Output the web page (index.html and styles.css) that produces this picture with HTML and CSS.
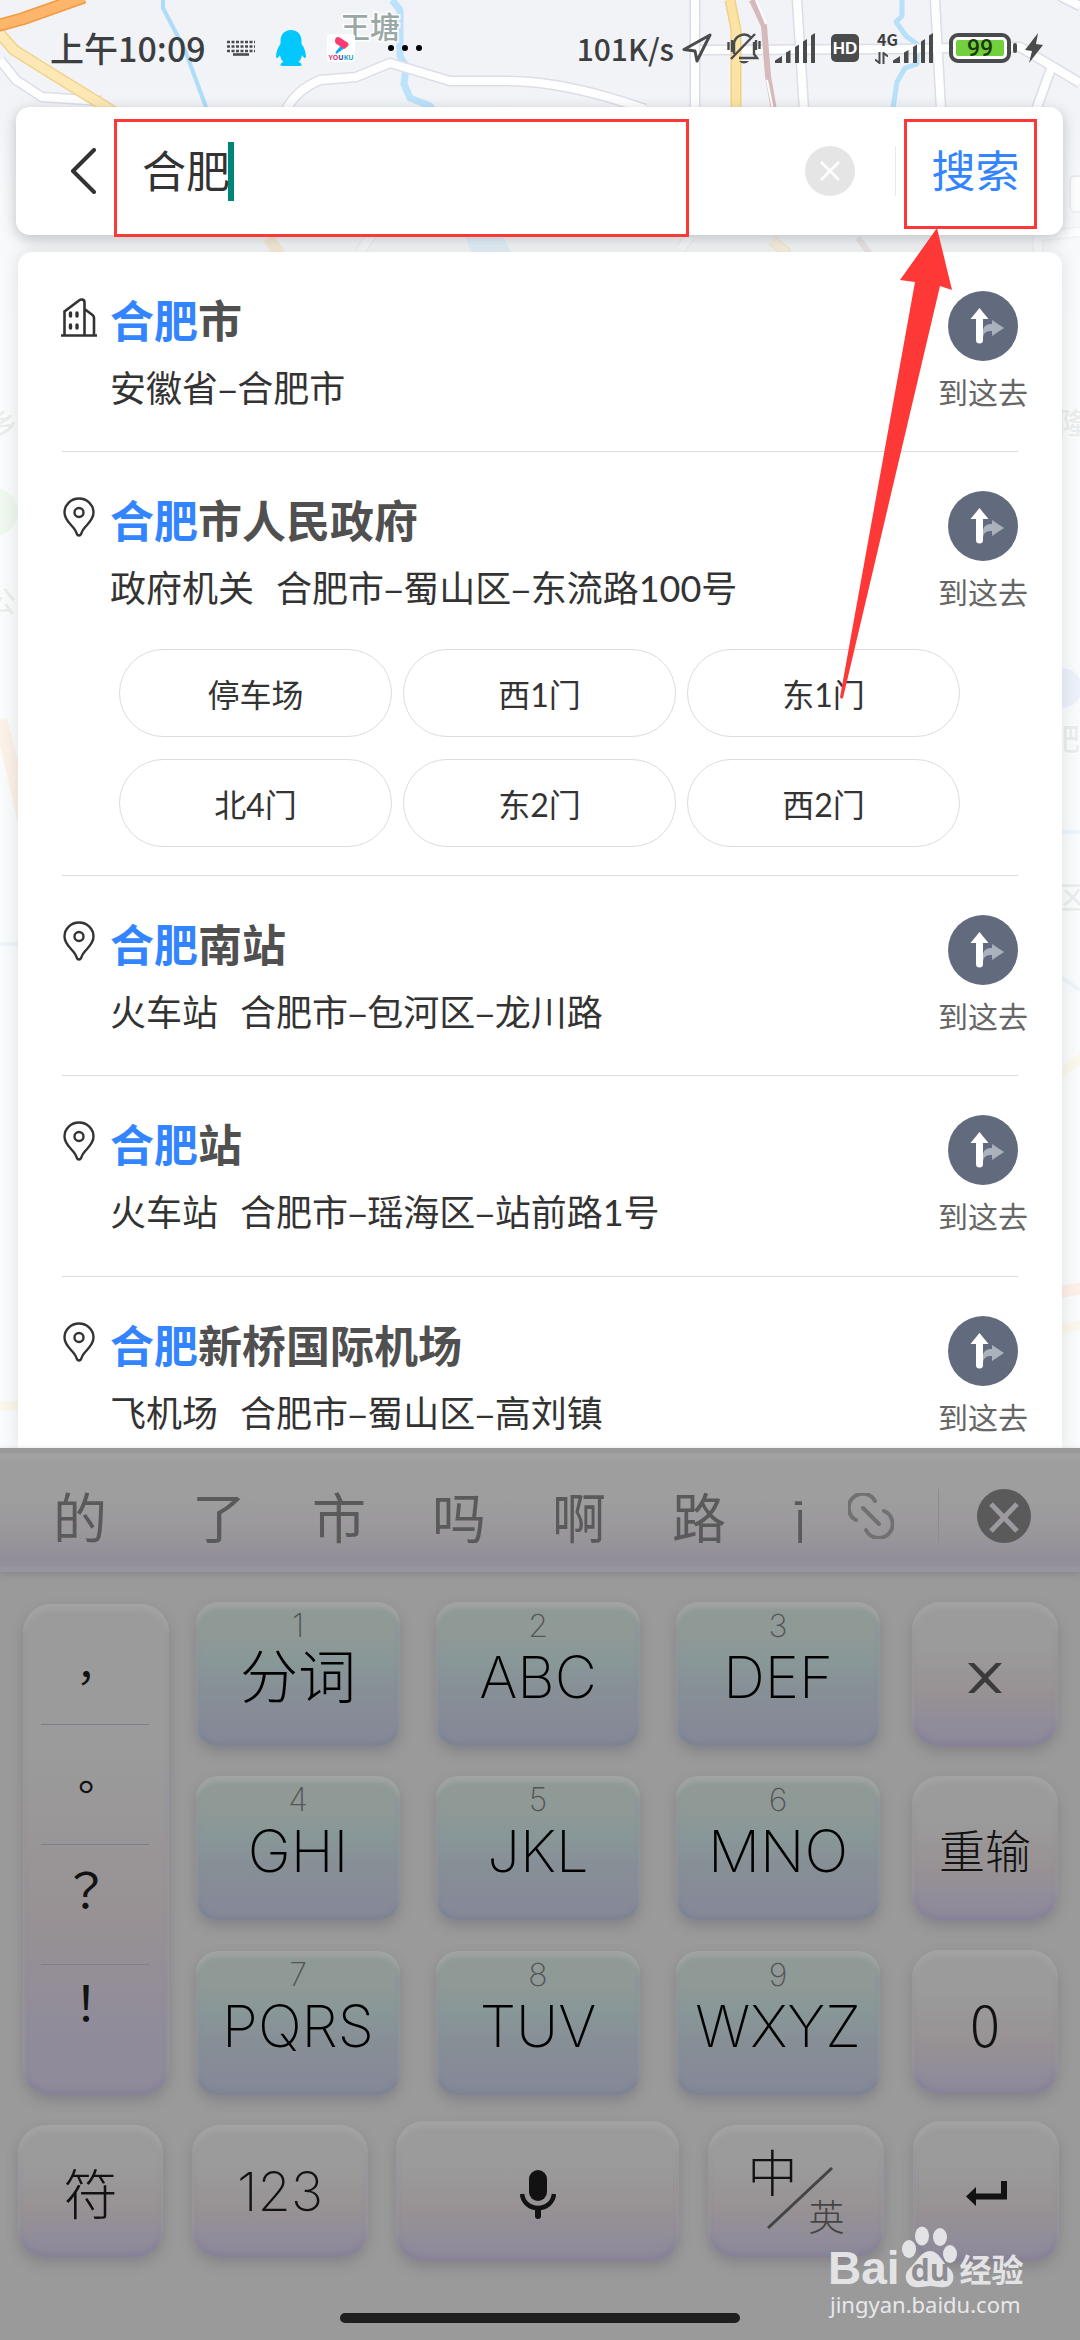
FILE: index.html
```html
<!DOCTYPE html>
<html lang="zh-CN">
<head>
<meta charset="utf-8">
<meta name="viewport" content="width=device-width, initial-scale=1">
<title>合肥 - 搜索</title>
<link rel="stylesheet" href="styles.css">
</head>
<body>
<svg class="symbols" aria-hidden="true">
  <symbol id="pin" viewBox="0 0 36 40">
    <path d="M18 38.500c-1.600 0-2.200-1.200-2.700-3C13.500 29 3.500 25 3.500 15.500a14.500 14 0 0 1 29 0C32.500 25 22.500 29 20.700 35.500c-.5 1.800-1.100 3-2.700 3z" fill="none" stroke="#333" stroke-width="2.400"/>
    <circle cx="18" cy="15.500" r="4.500" fill="none" stroke="#333" stroke-width="2.400"/>
  </symbol>
  <symbol id="building" viewBox="0 0 36 40">
    <path d="M3.500 38V14.500L18 3.500c2-1.500 5.500-1.500 5.500 2V38M23.500 12l8 6c1 .8 1.500 1.500 1.500 3v17M0 38.500h36" fill="none" stroke="#333" stroke-width="2.600"/>
    <path d="M9.500 16v3M16 16v3M9.500 28v3M16 28v3" stroke="#333" stroke-width="3.400" stroke-linecap="round"/>
  </symbol>
  <symbol id="go" viewBox="0 0 70 70">
    <circle cx="35" cy="35" r="35" fill="#616b7d"/>
    <path d="M35 45V39c1-5 5-6 9-6v-4l12 8-12 8v-5c-5 0-8 1-9 6z" fill="#acb2bd"/>
    <path d="M31.500 17l9 11H35v21a3.500 3.500 0 0 1-7 0V28h-5.500z" fill="#fff"/>
  </symbol>
  <symbol id="signal" viewBox="0 0 40 30">
    <path d="M0 30V27.500L7 23v7zM11 30V19.500L15.500 17v13zM20 30V14l4-2.500V30zM28 30V8.500L32 6v24zM36 30V2.500L40 0v30z" fill="#4a4b4d"/>
  </symbol>
</svg>

<svg class="map" viewBox="0 0 1080 2340" preserveAspectRatio="xMidYMin slice" aria-hidden="true">
  <g fill="none" stroke-linejoin="round">
    <path d="M163 0v8l22 42 22 60" stroke="#a6dafa" stroke-width="4"/>
    <path d="M392 0l8 10v46l6 10-2 18 6 14 20 8 4 6" stroke="#b6e0fb" stroke-width="7"/>
    <path d="M902 0v16l-6 6 10 14 11 8v20l-12 4-8 14-4 26" stroke="#b0def9" stroke-width="5"/>
    <g stroke="#d9dbe6" stroke-width="11">
      <path d="M0 60l16 20 26 17 60 4M286 110q10-20 34-30l36-3 34-14 60 18h50q60-2 145 28M695 0v110M797 0l7 110M935 0l6 110M700 50l200-1 120-2 60 36M1052 66l-16 44M1060-4l20 10M680 250l10-14M360 252l20-30M1038 252v-16l42-4"/>
    </g>
    <g stroke="#fff" stroke-width="8">
      <path d="M0 60l16 20 26 17 60 4M286 110q10-20 34-30l36-3 34-14 60 18h50q60-2 145 28M695 0v110M797 0l7 110M935 0l6 110M700 50l200-1 120-2 60 36M1052 66l-16 44M1060-4l20 10M680 250l10-14M360 252l20-30M1038 252v-16l42-4"/>
    </g>
    <path d="M0 34l14 16 40 25 60 37" stroke="#f0cf83" stroke-width="12"/>
    <path d="M0 34l14 16 40 25 60 37" stroke="#fee7ad" stroke-width="9"/>
    <path d="M-4 26l26-7 62-22" stroke="#f0922c" stroke-width="13"/>
    <path d="M-4 26l26-7 62-22" stroke="#ffae5c" stroke-width="10"/>
    <path d="M730 0l6 30v80M772 240l16 14" stroke="#f0cd78" stroke-width="11"/>
    <path d="M730 0l6 30v80M772 240l16 14" stroke="#fee19a" stroke-width="8"/>
    <path d="M752 0l12 26 4 50 6 34M858 238l12 16" stroke="#d3b3b3" stroke-width="6"/>
    <path d="M756 0l10 24M767 80l6 30" stroke="#fff" stroke-width="2"/>
    <path d="M268 238l12 16" stroke="#f5cd80" stroke-width="12"/>
    <path d="M465 236h38l10 20h-40z" fill="#b6e0fb"/>
    <path d="M0 720q14 50 24 100" stroke="#ffb77a" stroke-width="14"/>
    <path d="M1060 1074l24-18M1060 1330l24-6M0 1406h20" stroke="#fbd98c" stroke-width="9"/>
    <path d="M1060 1292l24-4" stroke="#ffae7a" stroke-width="12"/>
    <path d="M0 944h18M1062 832h18M1062 978l18 12" stroke="#9fd0f5" stroke-width="4"/>
  </g>
  <circle cx="-6" cy="512" r="24" fill="#a8e0a8"/>
  <circle cx="1062" cy="688" r="20" fill="#9db1f0"/>
  <rect x="1070" y="176" width="30" height="36" rx="5" fill="#fff" stroke="#d9d9de" stroke-width="2"/>
  <g class="map-text">
    <text x="340" y="38">王塘</text>
    <text x="-12" y="435">乡</text>
    <text x="-14" y="612">公</text>
    <text x="1058" y="434">隆</text>
    <text x="1050" y="750">肥东</text>
    <text x="1056" y="908">区</text>
  </g>
</svg>
<div class="map-fade"></div>

<div class="app">
  <header class="status">
    <div class="status-left">
      <span class="clock">上午10:09</span>
      <svg class="ic-kbd" viewBox="0 0 28 16"><path d="M0 2h28M0 6.500h28M0 11h28" stroke="#4a4b4d" stroke-width="2.600" stroke-dasharray="3 1.500"/><path d="M6 14.500h16" stroke="#4a4b4d" stroke-width="2.600"/></svg>
      <svg class="ic-qq" viewBox="0 0 30 36"><path d="M15 0C8 0 4.500 5 4.500 11v3C2 17 0 22 0 27c1 2 2.500.5 4-2 .5 3 1.500 5 3.500 7C4 33 3.500 36 6 36h18c2.500 0 2-3-1.500-4 2-2 3-4 3.500-7 1.500 2.500 3 4 4 2 0-5-2-10-4.500-13v-3C25.500 5 22 0 15 0z" fill="#02c8fe"/></svg>
      <svg class="ic-youku" viewBox="0 0 28 28"><rect width="28" height="28" rx="3" fill="#fff"/><path d="M10 19.500l10-7 1-4-8 4-4 5c-1 2 0 2.500 1 2z" fill="#12a8f5"/><path d="M8.500 4.500c1-2 3-2 5-.5l7 4.500c1.500 1 1.500 3 0 4l-3 2.500-8-5c-1.500-1-2-3-1-5.500z" fill="#fb3b71"/><text x="14" y="26" text-anchor="middle" class="youku-text"><tspan fill="#e8356f">YO</tspan><tspan fill="#39379b">U</tspan><tspan fill="#1aa5c9">KU</tspan></text></svg>
      <svg class="ic-dots" viewBox="0 0 34 6"><circle cx="3" cy="3" r="3"/><circle cx="17" cy="3" r="3"/><circle cx="31" cy="3" r="3"/></svg>
    </div>
    <div class="status-right">
      <span class="speed">101K/s</span>
      <svg class="ic-nav" viewBox="0 0 30 30"><path d="M28 2L2 16.500l11 1.500 2 10z" fill="none" stroke="#4a4b4d" stroke-width="3" stroke-linejoin="round"/></svg>
      <svg class="ic-bell" viewBox="0 0 34 32"><path d="M7 22V12a10 10 0 0 1 17-6.500M27 10v12l3 4H12M4 27L28 2M1.500 10v8M5 8v12M29 8v10M32.500 9v8" fill="none" stroke="#4a4b4d" stroke-width="2.400"/><path d="M12 29h10q-5 5-10 0z" fill="#4a4b4d"/></svg>
      <svg class="ic-signal"><use href="#signal"/></svg>
      <svg class="ic-hd" viewBox="0 0 28 28"><rect width="28" height="28" rx="5" fill="#4a4b4d"/><text x="14" y="20" text-anchor="middle">HD</text></svg>
      <span class="net"><span class="net-type">4G</span><svg class="ic-updown" viewBox="0 0 13 12"><path d="M4.500 0v11L0 7.500M8.500 12V1L13 4.500" fill="none" stroke="#4a4b4d" stroke-width="2"/></svg></span>
      <svg class="ic-signal"><use href="#signal"/></svg>
      <svg class="ic-battery" viewBox="0 0 68 30"><rect x="2" y="2" width="58" height="26" rx="7" fill="#fff" stroke="#4a4b4d" stroke-width="4"/><rect x="7" y="7" width="48" height="16" rx="2" fill="#72cf3d"/><rect x="64" y="10" width="4" height="10" rx="2" fill="#4a4b4d"/><text x="31" y="23" text-anchor="middle">99</text></svg>
      <svg class="ic-bolt" viewBox="0 0 18 30"><path d="M13 0L0 17l7 1-3 12L18 12l-7-1z" fill="#4a4b4d"/></svg>
    </div>
  </header>

  <form class="search">
    <button class="back" type="button" aria-label="返回"><svg viewBox="0 0 26 46"><path d="M24 2L3 23l21 21" fill="none" stroke="#333" stroke-width="4" stroke-linecap="round" stroke-linejoin="round"/></svg></button>
    <label class="field"><input class="query" type="text" value="合肥" size="4" aria-label="搜索地点"><span class="caret"></span></label>
    <button class="clear" type="button" aria-label="清除"><svg viewBox="0 0 50 50"><circle cx="25" cy="25" r="25" fill="#e5e5e5"/><path d="M16 16l18 18M34 16L16 34" stroke="#fff" stroke-width="2.600"/></svg></button>
    <button class="submit" type="button">搜索</button>
  </form>

  <main class="results">
    <article class="row">
      <svg class="row-icon"><use href="#building"/></svg>
      <div class="row-text"><h2><em>合肥</em>市</h2><p>安徽省<i>–</i>合肥市</p></div>
      <button class="go" type="button"><svg><use href="#go"/></svg>到这去</button>
    </article>
    <article class="row with-gates">
      <svg class="row-icon"><use href="#pin"/></svg>
      <div class="row-text"><h2><em>合肥</em>市人民政府</h2><p><span>政府机关</span>合肥市<i>–</i>蜀山区<i>–</i>东流路<b>100</b>号</p></div>
      <button class="go" type="button"><svg><use href="#go"/></svg>到这去</button>
      <div class="gates">
        <button type="button">停车场</button><button type="button">西<b>1</b>门</button><button type="button">东<b>1</b>门</button>
        <button type="button">北<b>4</b>门</button><button type="button">东<b>2</b>门</button><button type="button">西<b>2</b>门</button>
      </div>
    </article>
    <article class="row">
      <svg class="row-icon"><use href="#pin"/></svg>
      <div class="row-text"><h2><em>合肥</em>南站</h2><p><span>火车站</span>合肥市<i>–</i>包河区<i>–</i>龙川路</p></div>
      <button class="go" type="button"><svg><use href="#go"/></svg>到这去</button>
    </article>
    <article class="row">
      <svg class="row-icon"><use href="#pin"/></svg>
      <div class="row-text"><h2><em>合肥</em>站</h2><p><span>火车站</span>合肥市<i>–</i>瑶海区<i>–</i>站前路<b>1</b>号</p></div>
      <button class="go" type="button"><svg><use href="#go"/></svg>到这去</button>
    </article>
    <article class="row">
      <svg class="row-icon"><use href="#pin"/></svg>
      <div class="row-text"><h2><em>合肥</em>新桥国际机场</h2><p><span>飞机场</span>合肥市<i>–</i>蜀山区<i>–</i>高刘镇</p></div>
      <button class="go" type="button"><svg><use href="#go"/></svg>到这去</button>
    </article>
  </main>

  <section class="keyboard" aria-label="键盘">
    <div class="candidates">
      <div class="words">
        <button type="button">的</button><button type="button">了</button><button type="button">市</button><button type="button">吗</button><button type="button">啊</button><button type="button">路</button><button type="button">前</button>
      </div>
      <button class="link" type="button" aria-label="链接"><svg viewBox="0 0 46 46"><path d="M27 8A14 14 0 1 0 8 27M36 18A14 14 0 1 1 18 37M15 15l16 16" fill="none" stroke="#717171" stroke-width="4" stroke-linecap="round"/></svg></button>
      <button class="close" type="button" aria-label="关闭"><svg viewBox="0 0 54 54"><circle cx="27" cy="27" r="27" fill="#5a5a5a"/><path d="M14 15l26 27M40 15L14 42" stroke="#9c9a9e" stroke-width="5"/></svg></button>
    </div>
    <div class="pad">
      <div class="punct">
        <button type="button">，</button><button type="button">。</button><button type="button">？</button><button type="button">！</button>
      </div>
      <div class="letters">
        <button type="button" class="key"><small>1</small>分词</button><button type="button" class="key"><small>2</small>ABC</button><button type="button" class="key"><small>3</small>DEF</button>
        <button type="button" class="key"><small>4</small>GHI</button><button type="button" class="key"><small>5</small>JKL</button><button type="button" class="key"><small>6</small>MNO</button>
        <button type="button" class="key"><small>7</small>PQRS</button><button type="button" class="key"><small>8</small>TUV</button><button type="button" class="key"><small>9</small>WXYZ</button>
      </div>
      <div class="side">
        <button type="button" class="soft" aria-label="删除"><svg class="ic-x" viewBox="0 0 34 30"><path d="M0 0h6l11 11L28 0h6L20 15l14 15h-6L17 19 6 30H0l14-15z" fill="#3b3b3b"/></svg></button>
        <button type="button" class="soft retype">重输</button>
        <button type="button" class="soft zero">0</button>
      </div>
    </div>
    <div class="bottom">
      <button type="button" class="soft symbol">符</button>
      <button type="button" class="soft numbers">123</button>
      <button type="button" class="soft mic" aria-label="语音"><svg viewBox="0 0 36 50"><rect x="9" y="0" width="18" height="31" rx="9" fill="#121212"/><path d="M2 24c1 8 7 14 16 14s15-6 16-14" fill="none" stroke="#121212" stroke-width="4.500"/><path d="M15 38h6v8q0 3-3 3t-3-3z" fill="#121212"/></svg></button>
      <button type="button" class="soft lang"><span class="zh">中</span><svg viewBox="0 0 66 62"><path d="M1 61L65 1" stroke="#444" stroke-width="3"/></svg><span class="en">英</span></button>
      <button type="button" class="soft enter" aria-label="回车"><svg viewBox="0 0 41 26"><path d="M0 15.500L10 6v6.500h25V0h6v18.500H10V25z" fill="#121212"/></svg></button>
    </div>
    <div class="home"></div>
  </section>
</div>

<div class="mark mark-field"></div>
<div class="mark mark-submit"></div>
<svg class="pointer" viewBox="0 0 120 480" aria-hidden="true"><path d="M101 0L64 52l15 2L4 469q1 3 3 1L104 58l12 4z" fill="#fd3836"/></svg>

<div class="watermark">
  <div class="brand"><span class="latin">Bai</span>
    <svg viewBox="0 0 56 62"><g fill="#e3e3e6"><ellipse cx="7" cy="23" rx="7" ry="9"/><ellipse cx="20" cy="10" rx="7" ry="9.500"/><ellipse cx="38" cy="11" rx="7" ry="9"/><ellipse cx="48" cy="28" rx="7" ry="9"/><path d="M28 25c9 0 13 12 20 18 6 6 4 17-5 18-6 1-9-1-15-1s-9 2-15 1C4 60 1 49 7 43c7-6 12-18 21-18z"/></g><text x="28" y="55" text-anchor="middle">du</text></svg>
    <span class="han">经验</span></div>
  <a href="#">jingyan.baidu.com</a>
</div>
</body>
</html>
```
FILE: styles.css
```css
* { box-sizing: border-box; }

body {
  margin: 0;
  position: relative;
  background: #f1f3f7;
  font-family: "Noto Sans CJK SC", "Noto Sans", sans-serif;
  color: #333;
  overflow: hidden;
}

button, input {
  margin: 0;
  padding: 0;
  border: 0;
  background: none;
  font: inherit;
  color: inherit;
}

svg { display: block; flex: none; }
h2, p { margin: 0; }
em, i { font-style: normal; }

.symbols { position: absolute; width: 0; height: 0; }

.map, .map-fade { position: absolute; left: 0; top: 0; width: 100%; height: 100%; }
.map-fade { background: linear-gradient(rgba(236, 238, 245, 0.1), rgba(250, 250, 252, 0.1) 110px, rgba(250, 251, 252, 0.65) 200px, rgba(252, 253, 253, 0.84) 320px); }
.map-text text {
  font-size: 30px;
  font-weight: 500;
  fill: #8fa09b;
  stroke: #fff;
  stroke-width: 3px;
  paint-order: stroke;
}

.app {
  position: relative;
  display: flex;
  flex-direction: column;
  height: 100vh;
}

/* status bar */
.status {
  display: flex;
  justify-content: space-between;
  flex: none;
  height: 107px;
  padding: 20px 37px 31px 50px;
  color: #3d3e40;
  font-size: 34px;
  line-height: 56px;
  font-weight: 500;
}
.status-left, .status-right { display: flex; align-items: center; height: 56px; }
.clock { margin-right: 21px; }
.ic-kbd { width: 28px; height: 16px; margin-right: 21px; }
.ic-qq { width: 30px; height: 36px; margin-right: 21px; }
.ic-youku { width: 28px; height: 28px; margin-right: 33px; }
.youku-text { font: 700 7px "Open Sans", sans-serif; }
.ic-dots { width: 34px; height: 6px; }
.speed { margin-right: 8px; font-size: 30px; }
.ic-nav { width: 30px; height: 30px; margin-right: 15px; }
.ic-bell { width: 34px; height: 32px; margin-right: 14px; }
.ic-signal { width: 40px; height: 30px; }
.ic-hd { width: 28px; height: 28px; margin: 0 16px; }
.ic-hd text { font: 700 17px "Liberation Sans", sans-serif; fill: #fff; }
.net { display: flex; flex-direction: column; width: 18px; height: 32px; justify-content: space-between; }
.net-type { width: 30px; margin-left: 2px; font-size: 16px; line-height: 14px; font-weight: 700; }
.ic-updown { width: 13px; height: 12px; }
.ic-battery { width: 68px; height: 30px; margin: 0 8px 0 16px; }
.ic-battery text { font: 500 23px Roboto, sans-serif; fill: #1c3a10; }
.ic-bolt { width: 18px; height: 30px; }

/* search box */
.search {
  display: flex;
  align-items: center;
  flex: none;
  height: 128px;
  margin: 0 17px 17px 16px;
  border-radius: 14px;
  background: #fff;
  box-shadow: 0 4px 14px rgba(40, 50, 60, 0.28);
  font-size: 44px;
}
.back { width: 126px; padding-left: 54px; }
.back svg { width: 26px; height: 46px; }
.field { display: flex; align-items: center; flex: 1; min-width: 0; }
.query { width: 88px; height: 64px; padding-bottom: 4px; line-height: 60px; outline: 0; }
.caret { width: 6px; height: 59px; margin-left: -2px; background: #008577; }
.clear svg { width: 50px; height: 50px; }
.clear { margin-right: 40px; }
.submit {
  width: 168px;
  height: 50px;
  padding: 0 8px 4px 0;
  border-left: 1px solid #e9e9e9;
  line-height: 46px;
  color: #3385ff;
}

/* results */
.results {
  flex: 1;
  min-height: 0;
  overflow: hidden;
  margin: 0 18px;
  padding: 0 44px;
  border-radius: 14px 14px 0 0;
  background: #fff;
  box-shadow: 0 0 18px rgba(40, 60, 60, 0.14);
}
.row {
  display: grid;
  grid-template-columns: 48px 1fr 100px;
  align-items: start;
  border-bottom: 1px solid #dcdcdc;
  padding-bottom: 38px;
}
.with-gates { padding-bottom: 28px; }
.row-icon { width: 36px; height: 40px; margin: 45px 0 0 -1px; }
.row-text { padding-top: 37px; white-space: nowrap; }
.row h2 { font-size: 44px; line-height: 60px; font-weight: 700; color: #505050; }
.row em { color: #3385ff; }
.row p { font-size: 36px; line-height: 52px; padding-top: 11px; }
.row p span { margin-right: 22px; }
.row b { font-family: Lato, "Noto Sans", sans-serif; font-weight: 400; }
.go {
  display: flex;
  flex-direction: column;
  align-items: center;
  width: 90px;
  margin: 39px -10px 0 0;
  justify-self: end;
  font-size: 30px;
  line-height: 44px;
  color: #666;
  white-space: nowrap;
}
.go svg { width: 70px; height: 70px; margin-bottom: 8px; }
.gates {
  grid-column: 1 / -1;
  display: grid;
  grid-template-columns: repeat(3, 1fr);
  gap: 22px 11px;
  margin: 35px 58px 0 57px;
}
.gates button {
  height: 88px;
  border: 1px solid #dcdcdc;
  border-radius: 44px;
  font-size: 32px;
}

/* keyboard */
.keyboard {
  flex: none;
  display: flex;
  flex-direction: column;
  background: #9a9a9a;
  color: #121212;
}
.candidates {
  display: flex;
  align-items: center;
  height: 124px;
  padding: 12px 49px 0 20px;
  background: linear-gradient(#999 0 5px, #a3a3a3 6px, #9e9e9e 16px, #9e9e9e 50px, #9a979b 85px, #928e9a 112px, #928e9a 117px, #9895a0 120px, #9895a0);
  box-shadow: 0 2px 6px rgba(90, 85, 95, 0.3);
}
.words {
  display: flex;
  flex: 1;
  min-width: 0;
  overflow: hidden;
  font-size: 54px;
  line-height: 80px;
  color: #5a5a5a;
}
.words button { flex: none; width: 120px; }
.words button:first-child { width: 139px; padding-right: 19px; }
.link { margin: 0 44px 0 46px; }
.link svg { width: 46px; height: 46px; }
.close { padding-left: 38px; border-left: 1px solid #8d8b8f; }
.close svg { width: 54px; height: 54px; }

.pad { display: flex; padding: 30px 22px 0 23px; }
.soft, .punct {
  border-radius: 28px;
  background: linear-gradient(#9b9b9b 30%, #989294 62%, #8f8b9a 90%);
  box-shadow: 0 6px 12px rgba(95, 90, 100, 0.35), inset 0 6px 5px #a3a3a3, inset 0 -5px 5px #878298;
}
.punct {
  flex: 146;
  display: flex;
  flex-direction: column;
  height: 491px;
  margin: 2px 27px 0 0;
  padding-top: 1px;
  font-family: "Noto Sans CJK TC", sans-serif;
  font-size: 42px;
}
.punct button {
  height: 120px;
  margin: 0 20px 0 18px;
  padding: 0 18px 0 0;
  border-bottom: 1px solid #807c90;
  line-height: 60px;
}
.punct button:first-child { padding-top: 20px; }
.punct button:nth-child(3) { padding-bottom: 36px; font-size: 48px; }
.punct button:last-child { padding-bottom: 50px; border: 0; font-size: 48px; }
.letters {
  flex: 684;
  display: grid;
  grid-template-columns: repeat(3, 1fr);
  gap: 30px 36px;
}
.key {
  display: flex;
  flex-direction: column;
  align-items: center;
  height: 144px;
  padding-top: 5px;
  border-radius: 22px;
  background: linear-gradient(#8f9996 25%, #889798 42%, #878f96 62%, #868998 92%);
  box-shadow: 0 6px 12px rgba(95, 90, 100, 0.35), inset 0 6px 4px #a0a4a3, inset 0 -4px 5px #7c8392;
  font-family: Inter, "Noto Sans CJK SC", sans-serif;
  font-size: 58px;
  line-height: 64px;
  font-weight: 200;
  color: #000;
}
.key small { font-size: 32px; line-height: 38px; color: #555; }
.side { flex: 146; display: flex; flex-direction: column; gap: 30px; margin-left: 32px; }
.side .soft { height: 144px; }
.ic-x { width: 34px; height: 30px; margin: 8px auto 0; }
.soft { font-weight: 300; }
.retype { font-size: 46px; }
.zero { font-size: 56px; font-weight: 200; }

.bottom { display: flex; align-items: center; padding: 26px 21px 0 18px; }
.symbol { flex: 145; height: 132px; margin-right: 29px; font-size: 54px; }
.numbers { flex: 176; height: 132px; margin-right: 28px; font: 200 54px Inter, sans-serif; }
.mic { flex: 283; height: 140px; margin-right: 29px; }
.mic svg { width: 36px; height: 50px; margin: 8px auto 0; }
.lang { flex: 176; height: 132px; margin-right: 29px; display: flex; justify-content: center; }
.lang svg { width: 66px; height: 62px; margin: 42px -25px 0 -30px; }
.zh { font-size: 50px; line-height: 90px; }
.en { font-size: 36px; line-height: 60px; margin-top: 60px; color: #444; }
.enter { flex: 146; height: 140px; }
.enter svg { width: 41px; height: 26px; margin: 6px auto 0; }

.home { width: 400px; height: 10px; margin: 52px auto 17px; border-radius: 5px; background: #1f1f1f; }

/* annotations */
.mark { position: absolute; border: 3px solid #fd3836; }
.mark-field { left: 114px; top: 119px; width: 575px; height: 118px; }
.mark-submit { left: 904px; top: 119px; width: 133px; height: 110px; }
.pointer { position: absolute; left: 836px; top: 228px; width: 120px; height: 480px; }

/* watermark */
.watermark { position: absolute; left: 828px; top: 2226px; color: #e3e3e6; }
.brand { display: flex; align-items: flex-end; height: 62px; }
.brand svg { width: 56px; height: 62px; margin: 0 2px; }
.brand text { font: 700 30px "Open Sans", sans-serif; fill: #8f8d92; }
.latin { font: 700 46px/40px "Liberation Sans", sans-serif; }
.han { font-size: 32px; line-height: 40px; font-weight: 700; }
.watermark a { display: block; margin-left: 2px; font: 22px/32px "Noto Sans", sans-serif; color: #e8e8ea; text-decoration: none; }
```
